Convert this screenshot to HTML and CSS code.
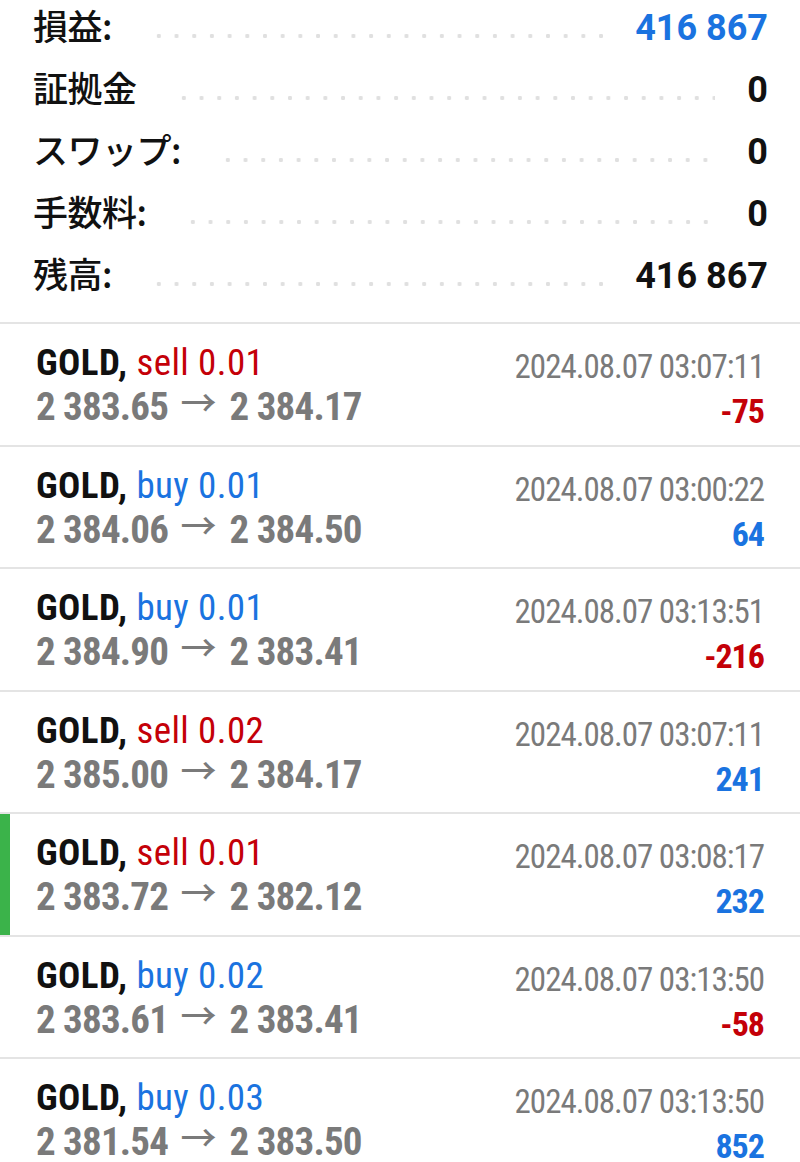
FILE: index.html
```html
<!DOCTYPE html>
<html lang="ja">
<head>
<meta charset="utf-8">
<title>履歴</title>
<link rel="stylesheet" href="styles.css">
</head>
<body>
<section class="summary">
  <div class="srow"><span class="label">損益:</span><span class="dots"></span><span class="value blue">416 867</span></div>
  <div class="srow"><span class="label">証拠金</span><span class="dots"></span><span class="value">0</span></div>
  <div class="srow"><span class="label">スワップ:</span><span class="dots"></span><span class="value">0</span></div>
  <div class="srow"><span class="label">手数料:</span><span class="dots"></span><span class="value">0</span></div>
  <div class="srow"><span class="label">残高:</span><span class="dots"></span><span class="value">416 867</span></div>
</section>
<ul class="trades">
  <li class="trade">
    <div class="left"><div class="title"><b>GOLD,</b> <span class="sell">sell 0.01</span></div><div class="prices">2 383.65 <span class="arrow">→</span> 2 384.17</div></div>
    <div class="right"><div class="date">2024.08.07 03:07:11</div><div class="profit neg">-75</div></div>
  </li>
  <li class="trade">
    <div class="left"><div class="title"><b>GOLD,</b> <span class="buy">buy 0.01</span></div><div class="prices">2 384.06 <span class="arrow">→</span> 2 384.50</div></div>
    <div class="right"><div class="date">2024.08.07 03:00:22</div><div class="profit pos">64</div></div>
  </li>
  <li class="trade">
    <div class="left"><div class="title"><b>GOLD,</b> <span class="buy">buy 0.01</span></div><div class="prices">2 384.90 <span class="arrow">→</span> 2 383.41</div></div>
    <div class="right"><div class="date">2024.08.07 03:13:51</div><div class="profit neg">-216</div></div>
  </li>
  <li class="trade">
    <div class="left"><div class="title"><b>GOLD,</b> <span class="sell">sell 0.02</span></div><div class="prices">2 385.00 <span class="arrow">→</span> 2 384.17</div></div>
    <div class="right"><div class="date">2024.08.07 03:07:11</div><div class="profit pos">241</div></div>
  </li>
  <li class="trade active">
    <div class="left"><div class="title"><b>GOLD,</b> <span class="sell">sell 0.01</span></div><div class="prices">2 383.72 <span class="arrow">→</span> 2 382.12</div></div>
    <div class="right"><div class="date">2024.08.07 03:08:17</div><div class="profit pos">232</div></div>
  </li>
  <li class="trade">
    <div class="left"><div class="title"><b>GOLD,</b> <span class="buy">buy 0.02</span></div><div class="prices">2 383.61 <span class="arrow">→</span> 2 383.41</div></div>
    <div class="right"><div class="date">2024.08.07 03:13:50</div><div class="profit neg">-58</div></div>
  </li>
  <li class="trade">
    <div class="left"><div class="title"><b>GOLD,</b> <span class="buy">buy 0.03</span></div><div class="prices">2 381.54 <span class="arrow">→</span> 2 383.50</div></div>
    <div class="right"><div class="date">2024.08.07 03:13:50</div><div class="profit pos">852</div></div>
  </li>
</ul>
</body>
</html>
```
FILE: styles.css
```css
html, body {
  margin: 0;
  padding: 0;
  background: #ffffff;
  overflow: hidden;
}
body {
  width: 800px;
  height: 1162px;
  font-family: Roboto, "Noto Sans CJK JP", sans-serif;
}
.summary {
  margin-top: -6px;
  padding: 0 32px 18px 33px;
}
.srow {
  display: flex;
  align-items: baseline;
  height: 62px;
}
.label {
  font-family: "Noto Sans CJK JP", sans-serif;
  font-size: 35px;
  font-weight: 500;
  line-height: 62px;
  color: #111111;
  letter-spacing: -0.5px;
}
.dots {
  flex: 1;
  align-self: stretch;
  margin: 0 32px 0 38px;
  background-image: radial-gradient(circle, #e0e0e0 1.9px, rgba(255,255,255,0) 2.5px);
  background-size: 17.7px 6px;
  background-repeat: repeat-x;
  background-position: 0 39px;
}
.value {
  font-family: Roboto, sans-serif;
  font-size: 36px;
  font-weight: 700;
  line-height: 62px;
  color: #111111;
}
.value.blue { color: #1a73e0; }

.trades {
  list-style: none;
  margin: 0;
  padding: 0;
}
.trade {
  box-sizing: border-box;
  height: 122.5px;
  border-top: 2px solid #e4e4e4;
  display: flex;
  justify-content: space-between;
  padding: 0 36px 0 36px;
}
.trade.active {
  box-shadow: inset 10px 0 0 #3bb34a;
}
.left, .right {
  font-family: "Roboto Condensed", Roboto, sans-serif;
  font-stretch: condensed;
  white-space: nowrap;
}
.left {
  padding-top: 17px;
  line-height: 44px;
}
.title {
  font-size: 37px;
  letter-spacing: 0.4px;
  color: #c40008;
}
.title b {
  font-weight: 700;
  color: #111111;
}
.sell { color: #c40008; }
.buy { color: #1a73e0; }
.prices {
  font-size: 39px;
  font-weight: 700;
  letter-spacing: -0.8px;
  color: #7a7a7a;
}
.arrow {
  font-family: "Noto Sans CJK JP", sans-serif;
  font-size: 36px;
  font-weight: 500;
  line-height: 30px;
  letter-spacing: 0;
  margin: 0 5px 0 4px;
  vertical-align: 3px;
}
.right {
  text-align: right;
  padding-top: 21px;
  line-height: 44px;
}
.date {
  font-size: 33px;
  letter-spacing: -1px;
  color: #7a7a7a;
}
.profit {
  font-size: 34px;
  font-weight: 700;
  letter-spacing: -1px;
}
.profit.neg { color: #c40008; }
.profit.pos { color: #1a73e0; }
```
